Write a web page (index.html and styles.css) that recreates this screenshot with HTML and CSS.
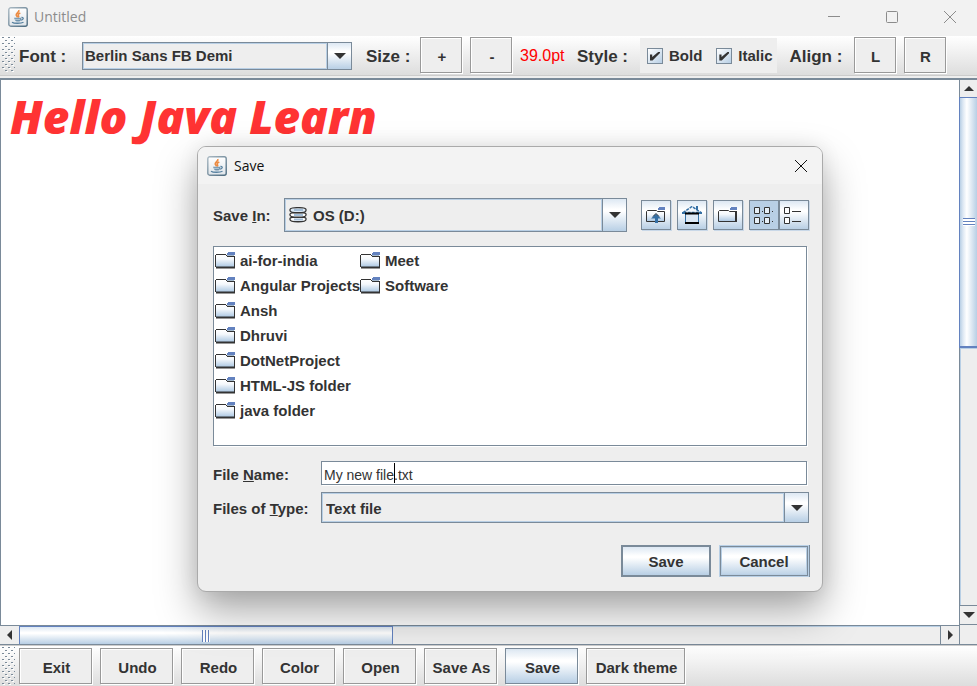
FILE: index.html
```html
<!DOCTYPE html>
<html lang="en">
<head>
<meta charset="utf-8">
<title>Untitled</title>
<link rel="stylesheet" href="styles.css">
</head>
<body>
<svg class="defs" width="0" height="0" aria-hidden="true">
  <defs>
    <linearGradient id="tile" x1="0" y1="0" x2="0" y2="1"><stop offset="0" stop-color="#fff"/><stop offset="1" stop-color="#dfe5ea"/></linearGradient>
    <linearGradient id="edge" x1="0" y1="0" x2="1" y2="1"><stop offset="0" stop-color="#a9b8c2"/><stop offset="1" stop-color="#4c6b80"/></linearGradient>
    <linearGradient id="paper" x1="0" y1="0" x2="0" y2="1"><stop offset="0" stop-color="#fff"/><stop offset=".35" stop-color="#f4f8fc"/><stop offset="1" stop-color="#abc7e2"/></linearGradient>
    <pattern id="bumps" width="6" height="6" patternUnits="userSpaceOnUse">
      <path fill="#fff" d="M1 1h2v1h-2zM4 4h2v1h-2z"/><path fill="#7a8a99" d="M0 0h2v1h-2zM3 3h2v1h-2z"/>
    </pattern>
    <symbol id="java" viewBox="0 0 20 20">
      <rect x=".8" y=".8" width="18.4" height="18.4" rx="2" fill="url(#tile)" stroke="url(#edge)" stroke-width="1.4"/>
      <path d="M10.800 3c1 2-3 3-2.600 5 .1.9 1.200 1.400 1.200 2.400M12.300 6c-2 .9-2.700 1.700-1.800 2.800.5.7.1 1.300-.4 1.700" fill="none" stroke="#ec8b42" stroke-width="1.600"/>
      <path d="M6 10.800h7.500l-1 3.200q-2.500 1.200-5 0z" fill="#6f93ad"/>
      <path d="M7 12.300h5" stroke="#dfe8ee" stroke-width=".7"/>
      <path d="M13.500 10.500c2.600-.4 2.200 2.200-.5 2.700M4 15.200c2 1.400 9 1.400 11.500 0" fill="none" stroke="#56809f" stroke-width="1.300"/>
    </symbol>
    <symbol id="folder" viewBox="0 0 20 17">
      <path d="M1 3h18v12H1z" fill="url(#paper)"/>
      <path d="M1 2h10v1H1zM0 3h1v12H0zM11 3h1v1h-1zM12 4h8v1h-8zM19 4h1v12h-1zM1 14.500h19v2H1z" fill="#333"/>
      <path d="M13 0h7v3h-8V1h1z" fill="#6382bf"/><path d="M12 3h7v1h-7z" fill="#a3b8cc"/>
    </symbol>
  </defs>
</svg>
<div class="window">
  <header class="titlebar">
    <svg class="logo" aria-hidden="true"><use href="#java"/></svg>
    <span>Untitled</span>
    <div class="controls">
      <button aria-label="Minimize"><svg viewBox="0 0 14 14"><path d="M1 6.500h12"/></svg></button>
      <button aria-label="Maximize"><svg viewBox="0 0 14 14"><rect x="1.500" y="1.500" width="11" height="11" rx="1"/></svg></button>
      <button aria-label="Close"><svg viewBox="0 0 14 14"><path d="M1 1l12 12M13 1L1 13"/></svg></button>
    </div>
  </header>

  <div class="toolbar top" role="toolbar">
    <svg class="grip" aria-hidden="true"><rect width="100%" height="100%" fill="url(#bumps)"/></svg>
    <label class="caption font-caption" for="font">Font :</label>
    <div class="combo font-combo">
      <select id="font"><option>Berlin Sans FB Demi</option></select>
      <span class="drop"><svg viewBox="0 0 12 6"><path d="M0 0h12L6 6z"/></svg></span>
    </div>
    <span class="caption size-caption">Size :</span>
    <button class="button small">+</button>
    <button class="button small">-</button>
    <output class="points">39.0pt</output>
    <span class="caption style-caption">Style :</span>
    <div class="checks">
      <label><input type="checkbox" checked>Bold</label>
      <label><input type="checkbox" checked>Italic</label>
    </div>
    <span class="caption align-caption">Align :</span>
    <button class="button small">L</button>
    <button class="button small">R</button>
  </div>

  <main class="editor">
    <div class="page" contenteditable="true" spellcheck="false">Hello Java Learn</div>
    <div class="scroll vertical">
      <button class="arrow" aria-label="Scroll up"><svg width="10" height="5" viewBox="0 0 10 5"><path d="M0 5h10L5 0z"/></svg></button>
      <div class="thumb"><i></i></div>
      <div class="track"></div>
      <button class="arrow" aria-label="Scroll down"><svg width="12" height="6" viewBox="0 0 12 6"><path d="M0 0h12L6 6z"/></svg></button>
    </div>
    <div class="scroll horizontal">
      <button class="arrow" aria-label="Scroll left"><svg width="5" height="10" viewBox="0 0 5 10"><path d="M5 0v10L0 5z"/></svg></button>
      <div class="thumb"><i></i></div>
      <div class="track"></div>
      <button class="arrow" aria-label="Scroll right"><svg width="5" height="10" viewBox="0 0 5 10"><path d="M0 0v10l5-5z"/></svg></button>
    </div>
    <div class="corner"></div>
  </main>

  <div class="toolbar bottom" role="toolbar">
    <svg class="grip" aria-hidden="true"><rect width="100%" height="100%" fill="url(#bumps)"/></svg>
    <button class="button">Exit</button>
    <button class="button">Undo</button>
    <button class="button">Redo</button>
    <button class="button">Color</button>
    <button class="button">Open</button>
    <button class="button">Save As</button>
    <button class="button pressed">Save</button>
    <button class="button wide">Dark theme</button>
  </div>

  <section class="dialog" role="dialog" aria-labelledby="dialog-title">
    <header class="dialog-title">
      <svg class="logo" aria-hidden="true"><use href="#java"/></svg>
      <span id="dialog-title">Save</span>
      <button class="close" aria-label="Close"><svg viewBox="0 0 14 14"><path d="M1 1l12 12M13 1L1 13"/></svg></button>
    </header>
    <div class="dialog-body">
      <div class="location">
        <label for="drive">Save <u>I</u>n:</label>
        <div class="combo drive-combo">
          <svg class="disk" viewBox="0 0 18 16" aria-hidden="true">
            <path fill="#c5d8ea" d="M2 3h14v10H2z"/>
            <g fill="#fff" stroke="#333" stroke-width="1.300"><path d="M1 11.500c0-2 16-2 16 0v1c0 3-16 3-16 0z"/><path d="M1 7c0-2 16-2 16 0v1c0 3-16 3-16 0z"/><path fill="#dce9f5" d="M1 2.500C1 0 17 0 17 2.500v1c0 3-16 3-16 0z"/></g>
            <path d="M5 3h9M5 8h9M5 12.500h9" stroke="#a3bed8" stroke-width="2"/>
          </svg>
          <select id="drive"><option>OS (D:)</option></select>
          <span class="drop"><svg viewBox="0 0 12 6"><path d="M0 0h12L6 6z"/></svg></span>
        </div>
        <div class="tools">
          <button class="tool" aria-label="Up One Level"><svg viewBox="0 0 20 18"><path d="M.5 5.500l1-1h9l1 1h7v10H.5z" fill="url(#paper)" stroke="#333"/><path d="M13 1h6v3h-7V2h1z" fill="#6382bf"/><path d="M10 8l5 4.500h-3V17H9v-4.500H5z" fill="#3570a5"/><path d="M7 10.500l3-3 3 3" fill="none" stroke="#123"/></svg></button>
          <button class="tool" aria-label="Home"><svg viewBox="0 0 20 18"><path d="M3.500 7.500h13V17h-13z" fill="#dce8f4" stroke="#3570a5"/><path d="M1 6.500l9-6 9 6z" fill="#f4f8fc" stroke="#3570a5" stroke-width="1.500" stroke-dasharray="3 1"/><path d="M14 0h2v4h-2zM0 6h3v2H0zM17 6h3v2h-3z" fill="#3570a5"/><path d="M3 7.500h14M3 17h14" stroke="#000" stroke-width="2"/></svg></button>
          <button class="tool" aria-label="Create New Folder"><svg viewBox="0 0 20 18"><path d="M.5 5.500l1-1h9l1 1h7v10H.5z" fill="url(#paper)" stroke="#333"/><path d="M13 1h6v3h-7V2h1z" fill="#6382bf"/><path d="M18 5v11" stroke="#333" stroke-width="2"/></svg></button>
          <div class="views">
            <button class="tool selected" aria-label="List"><svg viewBox="0 0 20 18"><path d="M.5 1.500h5v6h-5zM10.500 1.500h5v6h-5zM.5 11.500h5v6h-5zM10.500 11.500h5v6h-5z" fill="#e6eff7" stroke="#333"/><path d="M8 5.500h1M18 5.500h1M8 15.500h1M18 15.500h1" stroke="#333"/></svg></button>
            <button class="tool" aria-label="Details"><svg viewBox="0 0 20 18"><path d="M.5 1.500h5v6h-5zM.5 11.500h5v6h-5z" fill="#fff" stroke="#333"/><path d="M8 5.500h9M8 15.500h9" stroke="#333"/></svg></button>
          </div>
        </div>
      </div>
      <ul class="files">
        <li><svg><use href="#folder"/></svg>ai-for-india</li>
        <li><svg><use href="#folder"/></svg>Angular Projects</li>
        <li><svg><use href="#folder"/></svg>Ansh</li>
        <li><svg><use href="#folder"/></svg>Dhruvi</li>
        <li><svg><use href="#folder"/></svg>DotNetProject</li>
        <li><svg><use href="#folder"/></svg>HTML-JS folder</li>
        <li><svg><use href="#folder"/></svg>java folder</li>
        <li><svg><use href="#folder"/></svg>Meet</li>
        <li><svg><use href="#folder"/></svg>Software</li>
      </ul>
      <div class="fields">
        <label for="name">File <u>N</u>ame:</label>
        <div class="name-box"><input id="name" type="text" value="My new file.txt" spellcheck="false"><span class="caret"></span></div>
        <label for="type">Files of <u>T</u>ype:</label>
        <div class="combo type-combo">
          <select id="type"><option>Text file</option></select>
          <span class="drop"><svg viewBox="0 0 12 6"><path d="M0 0h12L6 6z"/></svg></span>
        </div>
      </div>
      <div class="actions">
        <button class="action primary">Save</button>
        <button class="action focused">Cancel</button>
      </div>
    </div>
  </section>
</div>
</body>
</html>
```
FILE: styles.css
```css
:root {
  --line: #7a8a99;
  --ink: #333;
  --panel: #eee;
  --blue: #b8cfe5;
  --accent: #6382bf;
  --metal: linear-gradient(#dde8f3, #fff 32%, #fff 38%, #b8cfe5);
}

* { box-sizing: border-box; }

body {
  margin: 0;
  color: var(--ink);
  font: bold 15px/20px "Liberation Sans", Arial, sans-serif;
}

button, select, input { font: inherit; color: inherit; margin: 0; outline: 0; }
button { padding: 0; }
.defs { position: absolute; }

.window {
  position: relative;
  display: flex;
  flex-direction: column;
  height: 100vh;
  overflow: hidden;
  background: var(--panel);
}

.titlebar, .dialog-title {
  display: flex;
  align-items: center;
  font: 14px/20px "Open Sans", "Segoe UI", sans-serif;
}

.titlebar {
  flex: none;
  height: 36px;
  padding: 0 0 2px 8px;
  gap: 6px;
  color: #8c8c8c;
  background: #f2f2f2;
}

.logo { width: 20px; height: 20px; }
.controls { display: flex; gap: 44px; margin-left: auto; padding-right: 20px; }
.controls button, .close { display: flex; border: 0; background: none; }
.controls svg, .close svg { width: 14px; height: 14px; fill: none; stroke: #8c8c8c; }

.toolbar { flex: none; display: flex; align-items: center; gap: 8px; padding-left: 2px; }
.toolbar.top {
  height: 42px;
  padding-bottom: 4px;
  background: linear-gradient(#fff, #ddd 39px, #ccc 39px, #ccc 40px, #eee 40px);
}
.toolbar.bottom {
  height: 41px;
  border-top: 1px solid #ccc;
  background: linear-gradient(#fff, #ddd);
}
.grip { width: 13px; height: 36px; margin-right: -4px; }
.bottom .grip { height: 38px; }

.caption { padding-top: 3px; font-size: 17px; white-space: nowrap; }
.font-caption { width: 55px; }
.size-caption { width: 52px; padding-left: 6px; }
.style-caption { width: 59px; padding-left: 4px; }
.align-caption { width: 61px; padding-left: 5px; }
.points { width: 45px; padding-top: 2px; color: #f00; font-size: 16px; font-weight: normal; white-space: nowrap; }

.button {
  height: 36px;
  min-width: 73px;
  padding: 3px 5px 0 7px;
  border: 1px solid #999;
  background: var(--panel);
  box-shadow: inset 1px 1px #fff, 1px 1px #fff;
  white-space: nowrap;
}
.button.small { min-width: 42px; }
.button.wide { min-width: 99px; }
.button.pressed { border-color: var(--line); background: var(--metal); box-shadow: 1px 1px #fff; }

.combo {
  display: flex;
  border: 1px solid var(--line);
  background: var(--panel);
  box-shadow: inset 1px 1px var(--blue), inset 0 -1px var(--blue);
}
.combo select { flex: 1; min-width: 0; padding: 0 2px; border: 0; background: none; appearance: none; }
.drop {
  display: flex;
  align-items: center;
  justify-content: center;
  width: 24px;
  border-left: 1px solid var(--line);
  background: var(--metal);
  box-shadow: -1px 0 var(--blue);
  pointer-events: none;
}
.drop svg { width: 12px; height: 6px; fill: var(--ink); }
.font-combo { width: 270px; height: 28px; margin-top: 2px; }

.checks { display: flex; align-items: center; gap: 14px; height: 35px; padding: 0 4px 0 7px; background: var(--panel); }
.checks label { display: flex; align-items: center; gap: 6px; padding-top: 2px; }
.checks input {
  width: 16px;
  height: 16px;
  border: 1px solid var(--line);
  appearance: none;
  background: linear-gradient(135deg, #fff, #b8cfe5);
  display: grid;
  place-items: center;
}
.checks input:checked::before {
  content: "";
  width: 10px;
  height: 9px;
  background: var(--ink);
  clip-path: polygon(0 33%, 22% 33%, 22% 62%, 88% 0, 100% 0, 100% 18%, 25% 100%, 0 100%);
}

.editor {
  flex: 1;
  min-height: 0;
  display: grid;
  grid-template-columns: 1fr 18px;
  grid-template-rows: 1fr 19px;
  border-top: 2px solid var(--line);
  border-bottom: 1px solid var(--line);
}
.page {
  overflow: hidden;
  padding: 6px 9px;
  border-left: 1px solid var(--line);
  background: #fff;
  color: #f33;
  font: italic 800 46px/60px "Berlin Sans FB Demi", "Open Sans", sans-serif;
  outline: 0;
}

.scroll { display: flex; background: var(--panel); }
.scroll .arrow { flex: none; display: flex; align-items: center; justify-content: center; border: 0; background: var(--panel); }
.arrow svg { fill: var(--ink); }
.thumb { display: flex; align-items: center; justify-content: center; }
.track { flex: 1; }
.vertical { flex-direction: column; border-left: 1px solid var(--line); }
.vertical .arrow { height: 17px; }
.vertical .arrow:last-child { height: 20px; border-top: 1px solid var(--line); border-bottom: 1px solid var(--line); }
.vertical .thumb {
  height: 46%;
  border: solid var(--accent);
  border-width: 1px 0 2px 1px;
  margin-left: -1px;
  background: linear-gradient(90deg, #b8cfe5, #dde8f3 3px, #fff 40%, #b8cfe5);
}
.vertical .track { box-shadow: inset 1px 1px var(--blue); }
.vertical i { width: 12px; height: 8px; background: repeating-linear-gradient(var(--accent) 0 1px, #fff 1px 3px); }
.horizontal { border-top: 1px solid var(--line); }
.horizontal .arrow { width: 19px; }
.horizontal .arrow:last-child { border-left: 1px solid var(--line); }
.horizontal .thumb { width: 39%; border: solid var(--accent); border-width: 1px 1px 0; background: var(--metal); }
.horizontal .track { box-shadow: inset 0 1px var(--blue); }
.horizontal i { width: 8px; height: 12px; background: repeating-linear-gradient(90deg, var(--accent) 0 1px, #fff 1px 3px); }
.corner { border-left: 1px solid var(--line); }

.dialog {
  position: absolute;
  top: 146px;
  left: 197px;
  right: 154px;
  border: 1px solid #aaa;
  border-radius: 9px;
  background: var(--panel);
  box-shadow: 0 20px 40px rgba(0, 0, 0, .34), 0 0 20px rgba(0, 0, 0, .08);
}
.dialog-title {
  height: 37px;
  padding: 0 14px 0 9px;
  gap: 7px;
  border-radius: 8px 8px 0 0;
  color: #111;
  background: #f3f3f3;
}
.close { margin-left: auto; }
.close svg { stroke: #111; }
.dialog-body { padding: 14px 13px 14px 15px; }
.location { display: flex; align-items: center; margin-bottom: 14px; }
.location label { width: 71px; padding-top: 2px; }
.drive-combo { flex: 1; height: 34px; align-items: stretch; }
.disk { width: 18px; height: 16px; margin: 8px 0 0 4px; }
.drive-combo select { padding: 2px 0 0 6px; }
.tools { display: flex; gap: 6px; margin-left: 14px; }
.tool {
  display: flex;
  align-items: center;
  justify-content: center;
  width: 30px;
  height: 30px;
  border: 1px solid var(--line);
  background: var(--metal);
  box-shadow: 1px 1px #c9d8e8;
}
.tool svg { width: 20px; height: 18px; }
.views { display: flex; }
.tool.selected { background: var(--blue); }

.files {
  display: grid;
  grid-auto-flow: column;
  grid-template-rows: repeat(7, 25px);
  grid-auto-columns: 145px;
  height: 200px;
  margin: 0 2px 15px 0;
  padding: 1px;
  border: 1px solid var(--line);
  background: #fff;
  box-shadow: 1px 1px #fff;
  list-style: none;
  overflow: hidden;
}
.files li { display: flex; align-items: center; gap: 5px; white-space: nowrap; }
.files svg { flex: none; width: 20px; height: 17px; }

.fields { display: grid; grid-template-columns: 108px 1fr; row-gap: 7px; align-items: center; }
.fields label { padding-top: 3px; }
.name-box { position: relative; display: flex; margin-right: 2px; }
.name-box input {
  width: 100%;
  height: 24px;
  padding: 3px 2px 0;
  border: 1px solid var(--line);
  background: #fff;
  box-shadow: 1px 1px #fff;
  font-size: 14px;
  font-weight: normal;
}
.caret { position: absolute; top: 2px; left: 73px; width: 1px; height: 20px; background: #000; }
.type-combo { height: 31px; }
.type-combo select { padding: 2px 4px 0; }

.actions { display: flex; justify-content: flex-end; gap: 8px; margin-top: 22px; }
.action { width: 90px; height: 32px; padding-top: 1px; border: 2px solid var(--line); background: var(--metal); }
.action.focused { border: 1px solid var(--blue); box-shadow: inset 0 0 0 1px var(--line), inset 0 0 0 2px var(--blue), 1px 0 var(--line); }
```
